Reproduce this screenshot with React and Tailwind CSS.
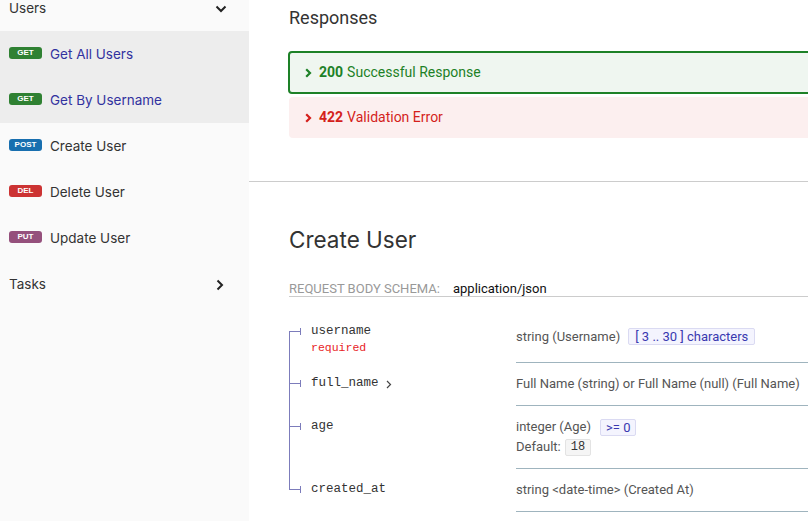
import React from "react";

const SIDE = "font-['Inter','Noto_Sans',sans-serif]";

function Badge({ m, c }) {
  return (
    <span
      className={`mt-[-3px] inline-flex h-[12px] w-[33px] shrink-0 items-center justify-center rounded-[3px] ${c} font-['Liberation_Sans',sans-serif] text-[8px] font-bold uppercase leading-none text-white`}
    >
      {m}
    </span>
  );
}

const items = [
  { m: "GET", c: "bg-[#2f8132]", t: "Get All Users", active: true },
  { m: "GET", c: "bg-[#2f8132]", t: "Get By Username", active: true },
  { m: "POST", c: "bg-[#186faf]", t: "Create User" },
  { m: "DEL", c: "bg-[#cc3333]", t: "Delete User" },
  { m: "PUT", c: "bg-[#95507c]", t: "Update User" },
];

function Chevron({ dir = "right", className = "" }) {
  if (dir === "down")
    return (
      <svg width="12" height="8" viewBox="0 0 12 8" className={className}>
        <polyline points="1.5,1.5 6,6 10.5,1.5" fill="none" stroke="#222" strokeWidth="2" />
      </svg>
    );
  return (
    <svg width="8" height="12" viewBox="0 0 8 12" className={className}>
      <polyline points="1.5,1.5 6,6 1.5,10.5" fill="none" stroke="#222" strokeWidth="2" />
    </svg>
  );
}

function Sidebar() {
  return (
    <aside className={`w-[249px] shrink-0 bg-[#fafafa] ${SIDE} text-[13.5px]`}>
      <div className="mt-[-15px] flex h-[46px] items-center justify-between pl-[9px] pr-[22px] pt-[1px] text-[#333]">
        <span>Users</span>
        <Chevron dir="down" />
      </div>
      {items.map((it, i) => (
        <div
          key={i}
          className={`flex h-[46px] items-center gap-[8px] pl-[9px] pt-[1px] ${
            it.active ? "bg-[#ededed] text-[#32329f]" : "text-[#333]"
          }`}
        >
          <Badge m={it.m} c={it.c} />
          <span>{it.t}</span>
        </div>
      ))}
      <div className="flex h-[46px] items-center justify-between pl-[9px] pr-[25px] pt-[1px] text-[#333]">
        <span>Tasks</span>
        <Chevron dir="right" />
      </div>
    </aside>
  );
}

function RespChevron({ color }) {
  return (
    <svg width="7" height="10" viewBox="0 0 7 10" className="mr-[7px] shrink-0">
      <polyline points="1.2,1.2 5,5 1.2,8.8" fill="none" stroke={color} strokeWidth="2.2" />
    </svg>
  );
}

const rows = [
  {
    name: "username",
    required: true,
    right: (
      <div className="flex items-center">
        <span>string (Username)</span>
        <span className="ml-[8px] rounded-[2px] border border-[#dadaf2] bg-[#f4f4fe] px-[6px] leading-[15px] text-[#3939b0]">
          [ 3 .. 30 ] characters
        </span>
      </div>
    ),
  },
  {
    name: "full_name",
    expand: true,
    right: <div>Full Name (string) or Full Name (null) (Full Name)</div>,
  },
  {
    name: "age",
    right: (
      <>
        <div className="flex items-center">
          <span>integer (Age)</span>
          <span className="ml-[9px] rounded-[2px] border border-[#dadaf2] bg-[#f4f4fe] px-[5px] leading-[15px] text-[#3939b0]">
            &gt;= 0
          </span>
        </div>
        <div className="flex items-center">
          <span>Default:</span>
          <span className="ml-[4px] rounded-[2px] border border-[#e3e3e3] bg-[#f5f5f5] px-[5px] font-['Liberation_Mono',monospace] text-[12px] leading-[15px] text-[#333]">
            18
          </span>
        </div>
      </>
    ),
  },
  {
    name: "created_at",
    right: <div>string &lt;date-time&gt; (Created At)</div>,
  },
];

function SchemaRow({ row, first, last }) {
  return (
    <div className="flex">
      <div className="flex w-[227px] shrink-0">
        <div className="flex w-[11px] shrink-0 flex-col">
          <div
            className={`h-[21px] border-b border-[#7c7cbb] ${first ? "" : "border-l"}`}
          />
          <div className={`flex-1 border-[#7c7cbb] ${last ? "" : "border-l"}`} />
        </div>
        <div className="mt-[17px] h-[7px] w-px shrink-0 bg-[#7c7cbb]" />
        <div className="ml-[10px] pb-[10px] pt-[10px] font-['Liberation_Mono',monospace] text-[12.5px] text-[#333]">
          <div className="flex items-center leading-[21px]">
            <span>{row.name}</span>
            {row.expand && (
              <svg width="6" height="9" viewBox="0 0 6 9" className="ml-[7px] mt-[1px]">
                <polyline points="1,1 4.5,4.5 1,8" fill="none" stroke="#444" strokeWidth="1.2" />
              </svg>
            )}
          </div>
          {row.required && (
            <div className="text-[11.5px] leading-[11px] text-[#e8231f]">required</div>
          )}
        </div>
      </div>
      <div className="flex min-w-0 flex-1 flex-col justify-center border-b border-[#9fb4be] py-[11px] font-['Roboto',sans-serif] text-[13px] leading-[20px] text-[#555]">
        {row.right}
      </div>
    </div>
  );
}

export default function App() {
  return (
    <div className="flex h-[521px] w-[808px] overflow-hidden bg-white">
      <Sidebar />
      <main className="min-w-0 flex-1 overflow-hidden">
        <div className="w-[640px]">
          <section className="border-b border-[#cccccc] pb-[43px] pl-[40px] pt-[7px] font-['Roboto',sans-serif]">
            <h3 className="text-[18px] leading-[22px] text-[#333]">Responses</h3>
            <div className="-ml-px mt-[22px] flex h-[43px] items-center rounded-[4px] border-2 border-[#1d8127] bg-[#eff6f0] pl-[15px] text-[14px] text-[#1d8127]">
              <RespChevron color="#1d8127" />
              <span className="mr-[4px] font-bold">200</span>
              <span>Successful Response</span>
            </div>
            <div className="mt-[3px] flex h-[41px] items-center rounded-[4px] bg-[#fcefef] pl-[16px] text-[14px] text-[#d41f1c]">
              <RespChevron color="#d41f1c" />
              <span className="mr-[4px] font-bold">422</span>
              <span>Validation Error</span>
            </div>
          </section>
          <section className="pl-[40px] pt-[44px]">
            <h2 className={`${SIDE} text-[22.5px] font-normal leading-[28px] text-[#333]`}>
              Create User
            </h2>
            <div className="mt-[27px] flex border-b border-[#cccccc] font-['Roboto',sans-serif] text-[13px] leading-[15px]">
              <span className="w-[164px] uppercase text-[#999]">Request Body Schema:</span>
              <span className="text-[#111]">application/json</span>
            </div>
            <div className="mt-[14px]">
              {rows.map((r, i) => (
                <SchemaRow key={i} row={r} first={i === 0} last={i === rows.length - 1} />
              ))}
            </div>
          </section>
        </div>
      </main>
    </div>
  );
}
